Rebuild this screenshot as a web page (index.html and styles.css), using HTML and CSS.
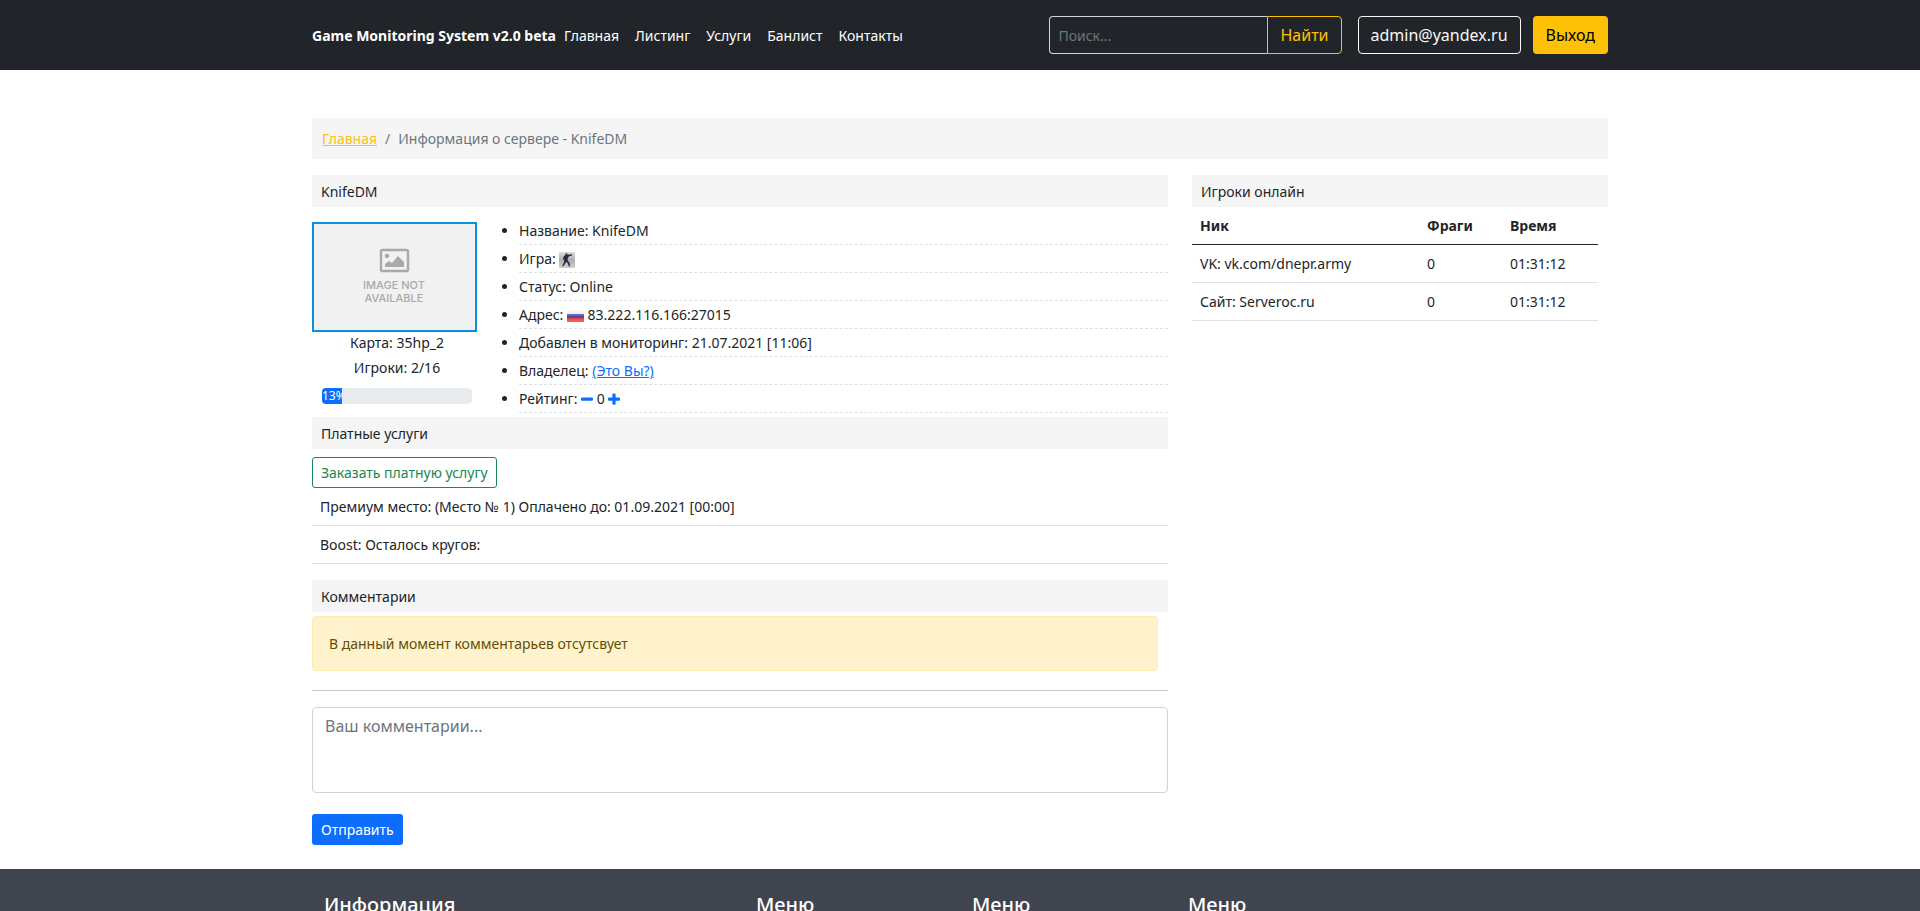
FILE: index.html
```html
<!DOCTYPE html>
<html lang="ru">

<head>
    <meta charset="UTF-8">
    <meta name="viewport" content="width=device-width, initial-scale=1.0">
    <title>Информация о сервере - KnifeDM</title>
    <link rel="stylesheet" href="styles.css">
</head>

<body>
    <header class="header">
        <div class="container header-inner">
            <a href="#" class="brand">Game Monitoring System v2.0 beta</a>
            <nav class="nav">
                <a href="#">Главная</a>
                <a href="#">Листинг</a>
                <a href="#">Услуги</a>
                <a href="#">Банлист</a>
                <a href="#">Контакты</a>
            </nav>
            <form class="search">
                <input type="search" class="search-input" placeholder="Поиск..." aria-label="Поиск">
                <button type="submit" class="btn btn-search">Найти</button>
            </form>
            <div class="user">
                <a href="#" class="btn btn-light">admin@yandex.ru</a>
                <a href="#" class="btn btn-warning">Выход</a>
            </div>
        </div>
    </header>

    <main class="container">
        <nav class="breadcrumb" aria-label="breadcrumb">
            <a href="#">Главная</a>
            <span class="divider">/</span>
            <span>Информация о сервере - KnifeDM</span>
        </nav>

        <div class="row">
            <div class="content">
                <h1 class="title">KnifeDM</h1>
                <div class="server">
                    <div class="server-map">
                        <svg class="map-image" viewBox="0 0 165 110" role="img" aria-label="Image not available">
                            <rect x="1" y="1" width="163" height="108" fill="#f1f1f1" stroke="#0a90dc" stroke-width="2" />
                            <rect x="69" y="28" width="27" height="21" rx="1.5" fill="none" stroke="#a9a9a9" stroke-width="2.4" />
                            <circle cx="75" cy="34" r="2.2" fill="#a9a9a9" />
                            <path d="M73 45v-3l4-3 3 2 6-7 6 6v5z" fill="#a9a9a9" />
                            <text x="82" y="67" class="map-text">IMAGE NOT</text>
                            <text x="82" y="80" class="map-text">AVAILABLE</text>
                        </svg>
                        <div class="map-info">Карта: 35hp_2</div>
                        <div class="map-info">Игроки: 2/16</div>
                        <div class="progress">
                            <div class="progress-bar" style="width: 13%">13%</div>
                        </div>
                    </div>
                    <ul class="server-info">
                        <li>Название: KnifeDM</li>
                        <li>Игра:
                            <svg class="game-icon" viewBox="0 0 16 16" role="img" aria-label="Counter-Strike">
                                <defs>
                                    <linearGradient id="game-bg" x1="0" y1="0" x2="0" y2="1">
                                        <stop offset="0" stop-color="#dcdcdc" />
                                        <stop offset="0.5" stop-color="#aeaeae" />
                                        <stop offset="1" stop-color="#d0d0d0" />
                                    </linearGradient>
                                </defs>
                                <rect width="16" height="16" rx="1" fill="url(#game-bg)" />
                                <path d="M6.5 1.5h2v1.3l4.5-.6v1.2l-3 .8-.8 1.6-.5.4v2.3l1.8 2.3.7 3.4H9.7L9 11.5 7.2 9.8 6 12l-1.8 2.3H3l1.8-3.5.6-3-1.5-.3 1-3.5 1.6-1z" fill="#262b3f" />
                            </svg>
                        </li>
                        <li>Статус: Online</li>
                        <li>Адрес:
                            <svg class="flag" viewBox="0 0 17 12" role="img" aria-label="Россия">
                                <defs>
                                    <linearGradient id="flag-ru" x1="0" y1="0" x2="0" y2="1">
                                        <stop offset="0" stop-color="#fafafa" />
                                        <stop offset="0.3" stop-color="#ececf0" />
                                        <stop offset="0.36" stop-color="#7075b8" />
                                        <stop offset="0.6" stop-color="#39419c" />
                                        <stop offset="0.68" stop-color="#ee3c4c" />
                                        <stop offset="1" stop-color="#ff6066" />
                                    </linearGradient>
                                </defs>
                                <rect width="17" height="12" fill="url(#flag-ru)" />
                            </svg>
                            83.222.116.166:27015</li>
                        <li>Добавлен в мониторинг: 21.07.2021 [11:06]</li>
                        <li>Владелец: <a href="#">(Это Вы?)</a></li>
                        <li>Рейтинг:
                            <a href="#" aria-label="Минус"><svg class="vote" viewBox="0 0 12 12"><rect y="4.5" width="12" height="3.2" rx="1" fill="#0d6efd" /></svg></a>
                            0
                            <a href="#" aria-label="Плюс"><svg class="vote" viewBox="0 0 12 12"><path d="M4.4 1.5q0-1 1-1h1.2q1 0 1 1v3h3.4q1 0 1 1v1.2q0 1-1 1H7.6v3q0 1-1 1H5.4q-1 0-1-1v-3H1q-1 0-1-1V5.500q0-1 1-1h3.400z" fill="#0d6efd" /></svg></a>
                        </li>
                    </ul>
                </div>

                <h2 class="title">Платные услуги</h2>
                <a href="#" class="btn btn-sm btn-success">Заказать платную услугу</a>
                <table class="table services">
                    <tbody>
                        <tr>
                            <td>Премиум место: (Место № 1) Оплачено до: 01.09.2021 [00:00]</td>
                        </tr>
                        <tr>
                            <td>Boost: Осталось кругов:</td>
                        </tr>
                    </tbody>
                </table>

                <h2 class="title">Комментарии</h2>
                <div class="alert">В данный момент комментарьев отсутсвует</div>
                <hr>
                <form class="comment-form">
                    <textarea rows="3" placeholder="Ваш комментарии..." aria-label="Ваш комментарии"></textarea>
                    <button type="submit" class="btn btn-sm btn-primary">Отправить</button>
                </form>
            </div>

            <aside class="sidebar">
                <h2 class="title">Игроки онлайн</h2>
                <div class="players">
                    <table class="table">
                        <thead>
                            <tr>
                                <th>Ник</th>
                                <th>Фраги</th>
                                <th>Время</th>
                            </tr>
                        </thead>
                        <tbody>
                            <tr>
                                <td>VK: vk.com/dnepr.army</td>
                                <td>0</td>
                                <td>01:31:12</td>
                            </tr>
                            <tr>
                                <td>Сайт: Serveroc.ru</td>
                                <td>0</td>
                                <td>01:31:12</td>
                            </tr>
                        </tbody>
                    </table>
                </div>
            </aside>
        </div>
    </main>

    <footer class="footer">
        <div class="container footer-inner">
            <h5>Информация</h5>
            <h5>Меню</h5>
            <h5>Меню</h5>
            <h5>Меню</h5>
        </div>
    </footer>
</body>

</html>
```
FILE: styles.css
```css
* {
    box-sizing: border-box;
}

body {
    margin: 0;
    font-family: "Noto Sans", "Liberation Sans", sans-serif;
    font-size: 14px;
    line-height: 21px;
    color: #212529;
    background-color: #fff;
}

a {
    color: #0d6efd;
}

.container {
    max-width: 1320px;
    margin: 0 auto;
    padding: 0 12px;
}

/* header */
.header {
    background-color: #212529;
    padding: 16px 0;
}

.header-inner {
    display: flex;
    align-items: center;
}

.brand {
    color: #fff;
    font-weight: bold;
    text-decoration: none;
}

.nav {
    display: flex;
    margin-right: auto;
}

.nav a {
    color: #fff;
    padding: 8px;
    text-decoration: none;
}

.search {
    display: flex;
    margin-right: 16px;
}

.search-input {
    width: 218px;
    padding: 4px 8px;
    font: inherit;
    color: #fff;
    background-color: #212529;
    border: 1px solid #ced4da;
    border-right: none;
    border-radius: 4px 0 0 4px;
}

.search-input::placeholder,
textarea::placeholder {
    color: #6c757d;
    opacity: 1;
}

.user {
    display: flex;
    gap: 12px;
}

.btn {
    display: inline-block;
    padding: 6px 12px;
    font-family: inherit;
    font-size: 16px;
    line-height: 24px;
    text-decoration: none;
    background-color: transparent;
    border: 1px solid transparent;
    border-radius: 4px;
    cursor: pointer;
}

.btn-sm {
    padding: 4px 8px;
    font-size: 14px;
    line-height: 21px;
    border-radius: 3px;
}

.btn-search {
    color: #ffc107;
    border-color: #ffc107;
    border-radius: 0 4px 4px 0;
}

.btn-light {
    color: #f8f9fa;
    border-color: #f8f9fa;
}

.btn-warning {
    color: #000;
    background-color: #ffc107;
}

.btn-success {
    color: #198754;
    border-color: #198754;
}

.btn-primary {
    color: #fff;
    background-color: #0d6efd;
}

/* page */
.breadcrumb {
    display: flex;
    gap: 8px;
    margin: 48px 0 16px;
    padding: 10px;
    color: #6c757d;
    background-color: #f5f5f5;
}

.breadcrumb a {
    color: #ffc107;
}

.row {
    display: flex;
    gap: 24px;
}

.content {
    flex: 1;
    min-width: 0;
}

.sidebar {
    width: 416px;
}

.title {
    margin: 0;
    padding: 6px 9px 5px;
    font-size: 14px;
    font-weight: normal;
    background-color: #f5f5f5;
}

.server {
    display: flex;
    gap: 10px;
    margin-bottom: 4px;
}

.server-map {
    width: 170px;
    padding-top: 15px;
    text-align: center;
}

.map-image {
    display: block;
    width: 165px;
    height: 110px;
}

.map-text {
    font-family: Inter, sans-serif;
    font-size: 11px;
    font-weight: 500;
    fill: #a9a9a9;
    text-anchor: middle;
}

.map-info {
    margin-bottom: 4px;
}

.progress {
    height: 16px;
    margin: 6px 10px 0;
    background-color: #e9ecef;
    border-radius: 4px;
    overflow: hidden;
}

.map-info + .progress {
    margin-top: 10px;
}

.progress-bar {
    height: 100%;
    overflow: hidden;
    font-size: 12px;
    line-height: 16px;
    text-align: left;
    color: #fff;
    background-color: #0d6efd;
}

.server-info {
    flex: 1;
    margin: 10px 0 0;
    padding-left: 27px;
}

.server-info li {
    height: 28px;
    padding: 3px 0;
    border-bottom: 1px dashed #dee2e6;
}

.game-icon {
    width: 16px;
    height: 16px;
    vertical-align: middle;
}

.flag {
    width: 17px;
    height: 12px;
    vertical-align: middle;
}

.vote {
    width: 12px;
    height: 12px;
    vertical-align: -1px;
}

.btn-success {
    display: table;
    margin-top: 8px;
}

.table {
    width: 100%;
    border-spacing: 0;
}

.table th,
.table td {
    padding: 8px;
    text-align: left;
    border-bottom: 1px solid #dee2e6;
}

.table thead th {
    border-bottom-color: #212529;
}

.services {
    margin-bottom: 16px;
}

.players {
    padding-right: 10px;
}

.players th:nth-child(2) {
    width: 83px;
}

.players th:nth-child(3) {
    width: 96px;
}

.alert {
    margin: 4px 10px 19px 0;
    padding: 16px;
    color: #664d03;
    background-color: #fff3cd;
    border: 1px solid #ffecb5;
    border-radius: 4px;
}

hr {
    height: 1px;
    margin: 0 0 16px;
    border: none;
    background-color: #c8c9ca;
}

.comment-form textarea {
    display: block;
    width: 100%;
    margin-bottom: 21px;
    padding: 6px 12px;
    font-family: inherit;
    font-size: 16px;
    line-height: 24px;
    border: 1px solid #ced4da;
    border-radius: 4px;
    resize: none;
}

/* footer */
.footer {
    margin-top: 24px;
    padding: 24px 0;
    color: #fff;
    background-color: #3f444f;
}

.footer-inner {
    display: grid;
    grid-template-columns: 4fr 2fr 2fr 4fr;
}

.footer h5 {
    margin: 0;
    padding: 0 12px;
    font-size: 20px;
    font-weight: 500;
    line-height: 24px;
}
```
